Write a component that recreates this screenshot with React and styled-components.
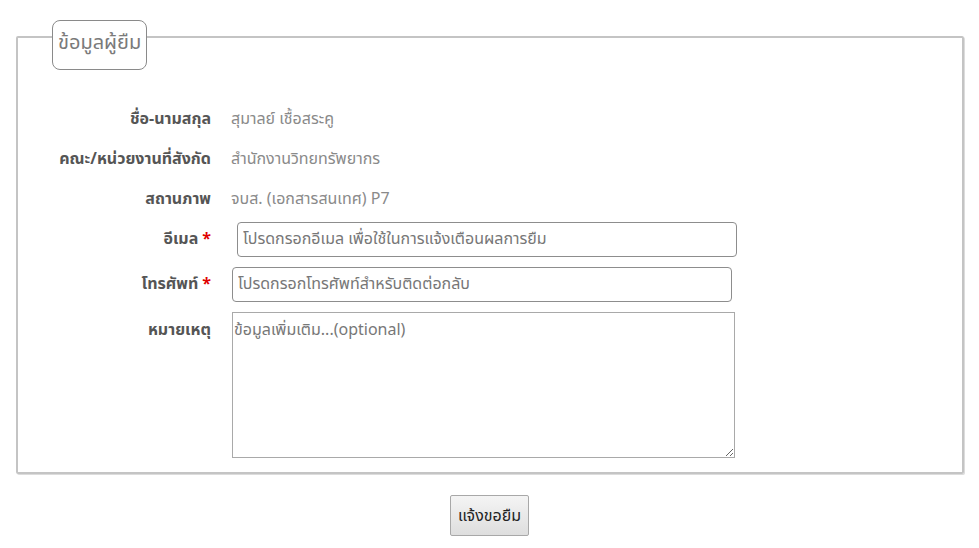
import React from 'react';
import styled, { createGlobalStyle } from 'styled-components';

const GlobalStyle = createGlobalStyle`
    body {
        margin: 8px;
        background: #fff;
        font-family: Tahoma, "Noto Sans Thai", "Noto Sans", "DejaVu Sans", sans-serif;
    }
`;

const Page = styled.div`
    display: flex;
    flex-direction: column;
    align-items: center;
`;

const BorrowerBox = styled.fieldset`
    align-self: stretch;
    margin: 4px 7px 0 8px;
    padding: 21px 0 14px 0;
    border: 2px solid #c4c4c4;
    border-radius: 2px;
    box-shadow: 1px 1px 0 #dcdcdc;
`;

// the title box sits a little below the border line it interrupts
const BoxTitle = styled.legend`
    position: relative;
    top: 8px;
    margin-left: 34px;
    padding: 8px 5px 11px 5px;
    border: 1px solid #8a8a8a;
    border-radius: 8px;
    font-size: 20px;
    line-height: 29px;
    color: #7a7a7a;
    background: #fff;
`;

const Form = styled.div`
    display: flex;
    flex-direction: column;
    padding-top: 16px;
`;

const Row = styled.div`
    display: grid;
    grid-template-columns: 193px 1fr;
    column-gap: ${(p) => p.$gap || 20}px;
    align-items: ${(p) => (p.$top ? 'start' : 'center')};
    min-height: 40px;
    margin-top: ${(p) => p.$space || 0}px;
`;

const Label = styled.div`
    text-align: right;
    font-weight: bold;
    font-size: 16px;
    color: #555;
    padding-top: ${(p) => p.$pad || 0}px;
`;

const Required = styled.span`
    color: #e00000;
    margin-left: 4px;
`;

const Value = styled.div`
    font-size: 16px;
    color: #8a8a8a;
`;

const TextInput = styled.input`
    box-sizing: border-box;
    width: 500px;
    height: 35px;
    padding: 0 5px;
    border: 1px solid #8d8d8d;
    border-radius: 4px;
    font-family: inherit;
    font-size: 16px;
    color: #333;
    &::placeholder {
        color: #777;
    }
`;

const NoteArea = styled.textarea`
    box-sizing: border-box;
    width: 503px;
    height: 146px;
    padding: 5px 1px 2px;
    border: 1px solid #a9a9a9;
    border-radius: 0;
    font-family: inherit;
    font-size: 16px;
    color: #333;
    &::placeholder {
        color: #777;
    }
`;

const SubmitButton = styled.button`
    margin-top: 21px;
    width: 79px;
    height: 41px;
    border: 1px solid #a8a8a8;
    border-radius: 2px;
    background: linear-gradient(#f4f4f4, #dedede);
    font-family: inherit;
    font-size: 16px;
    color: #222;
`;

const App = () => {
    return (
        <Page>
            <GlobalStyle />
            <BorrowerBox>
                <BoxTitle>ข้อมูลผู้ยืม</BoxTitle>
                <Form>
                    <Row>
                        <Label>ชื่อ-นามสกุล</Label>
                        <Value>สุมาลย์ เชื้อสระคู</Value>
                    </Row>
                    <Row>
                        <Label>คณะ/หน่วยงานที่สังกัด</Label>
                        <Value>สำนักงานวิทยทรัพยากร</Value>
                    </Row>
                    <Row>
                        <Label>สถานภาพ</Label>
                        <Value>จบส. (เอกสารสนเทศ) P7</Value>
                    </Row>
                    <Row $gap={26}>
                        <Label>อีเมล<Required>*</Required></Label>
                        <TextInput type="email" placeholder="โปรดกรอกอีเมล เพื่อใช้ในการแจ้งเตือนผลการยืม" />
                    </Row>
                    <Row $gap={21} $space={5}>
                        <Label>โทรศัพท์<Required>*</Required></Label>
                        <TextInput type="text" placeholder="โปรดกรอกโทรศัพท์สำหรับติดต่อกลับ" />
                    </Row>
                    <Row $gap={21} $top $space={8}>
                        <Label $pad={6}>หมายเหตุ</Label>
                        <NoteArea placeholder="ข้อมูลเพิ่มเติม...(optional)" />
                    </Row>
                </Form>
            </BorrowerBox>
            <SubmitButton>แจ้งขอยืม</SubmitButton>
        </Page>
    );
};

export default App;
